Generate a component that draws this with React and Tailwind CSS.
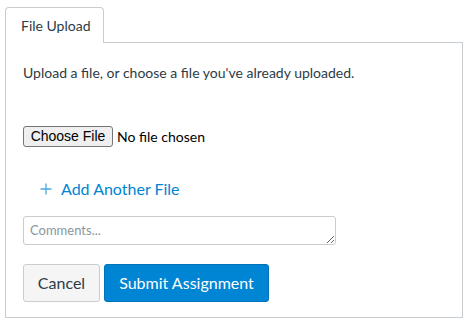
import React from 'react';

const App = () => {
  return (
    <div className="pt-[7px] pl-[5px] pr-[6px] bg-white min-h-screen" style={{ fontFamily: 'Lato, "Open Sans", sans-serif' }}>
      <div className="flex">
        <div className="relative z-10 -mb-px w-[99px] h-[36px] border border-b-0 border-[#c7cdd1] rounded-t-[4px] bg-white flex items-center pl-[15px] text-[14px] text-[#2d3b45]">
          File Upload
        </div>
      </div>
      <div className="border border-[#c7cdd1] h-[276px] pl-[17px] pt-[20px] text-[#2d3b45]">
        <p className="text-[14px] leading-5">Upload a file, or choose a file you've already uploaded.</p>

        <div className="mt-[43px] flex items-center h-[21px]">
          <span className="h-[21px] w-[90px] flex items-center justify-center bg-[#efefef] border border-[#767676] rounded-[3px] text-[14px] text-black" style={{ fontFamily: '"Liberation Sans", Arial, sans-serif' }}>
            Choose File
          </span>
          <span className="ml-[4px] text-[14px] text-black">No file chosen</span>
        </div>

        <button className="mt-[31px] ml-[17px] flex items-center gap-[9px] text-[16px] text-[#0084d4] h-[22px]">
          <svg width="12" height="12" viewBox="0 0 12 12" className="text-[#4aa8e3]">
            <path d="M6 0.5V11.5M0.5 6H11.5" stroke="currentColor" strokeWidth="1.3" />
          </svg>
          <span>Add Another File</span>
        </button>

        <textarea
          placeholder="Comments..."
          className="mt-[16px] block w-[313px] h-[29px] border border-[#c7cdd1] rounded-[3px] px-[6px] py-[3px] text-[13px] leading-5 placeholder:text-[#8b969e] outline-none"
        />

        <div className="mt-[19px] flex gap-[4px]">
          <button className="w-[77px] h-[38px] bg-[#f5f5f5] border border-[#c7cdd1] rounded-[3px] text-[16px] text-[#2d3b45]">
            Cancel
          </button>
          <button className="w-[165px] h-[38px] bg-[#0084d4] border border-[#0072b9] rounded-[3px] text-[16px] text-white">
            Submit Assignment
          </button>
        </div>
      </div>
    </div>
  );
};

export default App;
